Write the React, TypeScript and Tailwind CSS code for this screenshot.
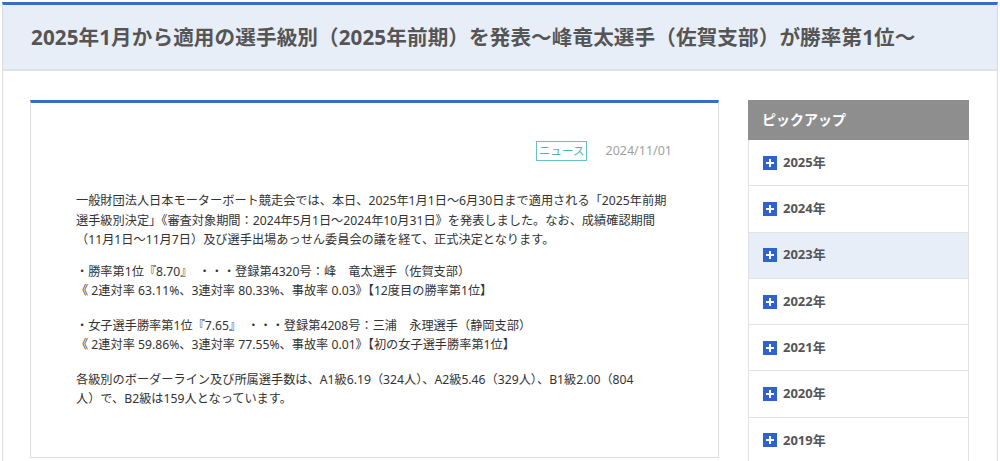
const years = ["2025年", "2024年", "2023年", "2022年", "2021年", "2020年", "2019年"];

const PlusIcon = () => (
  <span className="flex h-[14px] w-[14px] items-center justify-center bg-[#2f62cf]">
    <svg width="10" height="10" viewBox="0 0 10 10">
      <path d="M5 1v8M1 5h8" stroke="#fff" strokeWidth="2" />
    </svg>
  </span>
);

const App = () => {
  return (
    <div
      className="min-h-[461px] bg-white pt-[2px] px-[2px]"
      style={{ fontFamily: '"Noto Sans", "Noto Sans CJK JP", sans-serif' }}
    >
      <div className="min-h-[459px] border-x border-[#dddddd] border-t-[3px] border-t-[#3a6bc9]">
        {/* header */}
        <div className="flex h-[66px] items-center border-b-2 border-[#dde2ea] bg-[#e8eef8] pl-[28px]">
          <h1 className="text-[20.6px] font-bold tracking-[0.1px] text-[#555555]">
            2025年1月から適用の選手級別（2025年前期）を発表～峰竜太選手（佐賀支部）が勝率第1位～
          </h1>
        </div>

        <div className="flex gap-[29px] pl-[27px] pt-[29px]">
          {/* article */}
          <div className="h-[358px] w-[689px] border border-[#dddddd] border-t-[3px] border-t-[#3a6bc9] px-[45px] pt-[38px]">
            <div className="flex items-center justify-end gap-[18px] pr-[1px]">
              <span className="border border-[#66c2c2] px-[2px] text-[11.5px] leading-[18px] text-[#4fb3b3]">
                ニュース
              </span>
              <span className="text-[12.5px] text-[#a0a0a0]">2024/11/01</span>
            </div>
            <div className="mt-[30px] text-[12.2px] leading-[19.5px] text-[#333333]">
              <p className="mb-[12px]">
                一般財団法人日本モーターボート競走会では、本日、2025年1月1日～6月30日まで適用される「2025年前期
                <br />
                選手級別決定」《審査対象期間：2024年5月1日～2024年10月31日》を発表しました。なお、成績確認期間
                <br />
                （11月1日～11月7日）及び選手出場あっせん委員会の議を経て、正式決定となります。
              </p>
              <p className="mb-[15px]">
                ・勝率第1位『8.70』　・・・登録第4320号：峰　竜太選手（佐賀支部）
                <br />
                《 2連対率 63.11%、3連対率 80.33%、事故率 0.03》【12度目の勝率第1位】
              </p>
              <p className="mb-[15px]">
                ・女子選手勝率第1位『7.65』　・・・登録第4208号：三浦　永理選手（静岡支部）
                <br />
                《 2連対率 59.86%、3連対率 77.55%、事故率 0.01》【初の女子選手勝率第1位】
              </p>
              <p>
                各級別のボーダーライン及び所属選手数は、A1級6.19（324人）、A2級5.46（329人）、B1級2.00（804
                <br />
                人）で、B2級は159人となっています。
              </p>
            </div>
          </div>

          {/* sidebar */}
          <div className="w-[221px]">
            <div className="flex h-[40px] items-center bg-[#8e8e8e] pb-[2px] pl-[14px] text-[14px] font-bold text-white">
              ピックアップ
            </div>
            {years.map((y) => (
              <div
                key={y}
                className={`flex h-[46.3px] items-center gap-[6px] border-x border-b border-[#e2e2e2] pl-[14px] ${
                  y === "2023年" ? "bg-[#e8eef8]" : "bg-white"
                }`}
              >
                <PlusIcon />
                <span className="text-[13px] font-bold text-[#555555]">{y}</span>
              </div>
            ))}
          </div>
        </div>
      </div>
    </div>
  );
};

export default App;
